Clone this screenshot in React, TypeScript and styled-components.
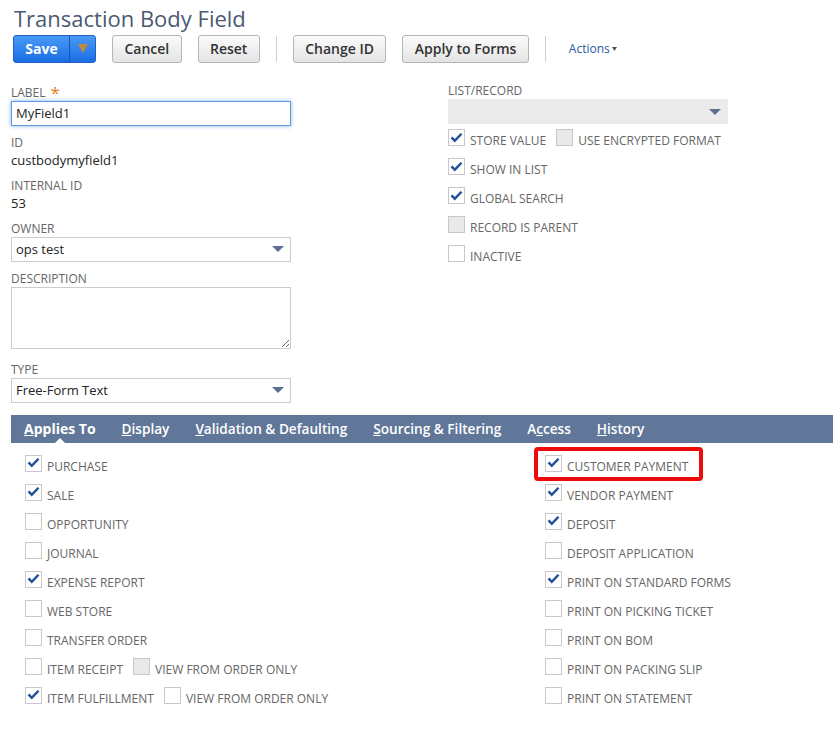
import React from "react";
import styled, { createGlobalStyle } from "styled-components";

const GlobalStyle = createGlobalStyle`
  html, body {
    margin: 0;
    padding: 0;
    background: #fff;
  }
  body {
    font-family: "Open Sans", "Liberation Sans", Arial, sans-serif;
    color: #222;
  }
`;

const Page = styled.div`
  width: 833px;
  overflow: hidden;
`;

const Header = styled.div`
  padding: 5.2px 0 0 13px;
`;

const Title = styled.h1`
  margin: 0 0 0 1px;
  font-size: 22px;
  line-height: 26px;
  font-weight: 400;
  color: #4b5a72;
`;

const Toolbar = styled.div`
  display: flex;
  align-items: center;
  gap: 16px;
  height: 28px;
  margin-top: 3.8px;
`;

const Button = styled.button`
  box-sizing: border-box;
  height: 28px;
  padding: 0 11.4px;
  border: 1px solid #b5b5b5;
  border-radius: 3px;
  background: linear-gradient(#fbfbfb, #e4e4e4);
  font: 600 14px "Open Sans", sans-serif;
  color: #333;
`;

const SplitButton = styled.div`
  box-sizing: border-box;
  display: flex;
  height: 28px;
  border: 1px solid #1c60c8;
  border-radius: 3px;
  background: linear-gradient(#4a9af6, #1a6de3);
  overflow: hidden;
`;

const SaveMain = styled.span`
  width: 55px;
  display: flex;
  align-items: center;
  justify-content: center;
  color: #fff;
  font-weight: 700;
  font-size: 14px;
`;

const SaveMenu = styled.span`
  width: 25px;
  display: flex;
  align-items: center;
  justify-content: center;
  border-left: 1px solid #1a56b4;
`;

const Separator = styled.div`
  width: 1px;
  height: 26px;
  background: #cfcfcf;
`;

const ActionsLink = styled.span`
  margin-left: 7px;
  font-size: 12px;
  color: #2a5aa2;
  display: flex;
  align-items: center;
  gap: 2px;
`;

const FormGrid = styled.div`
  display: grid;
  grid-template-columns: 437px 280px;
  padding: 19.4px 0 0 11px;
`;

const Column = styled.div<{ $offset?: number }>`
  display: flex;
  flex-direction: column;
  padding-top: ${(p) => p.$offset ?? 0}px;
`;

const Field = styled.div<{ $first?: boolean }>`
  margin-top: ${(p) => (p.$first ? 0 : 9)}px;
  width: 280px;
`;

const FieldLabel = styled.div`
  font-size: 12px;
  line-height: 15px;
  color: #666;
  text-transform: uppercase;
  margin-bottom: 1px;
`;

const Required = styled.span`
  color: #e07d22;
  font-size: 17px;
  line-height: 15px;
  vertical-align: top;
  margin-left: 5px;
`;

const Value = styled.div`
  font-size: 13px;
  line-height: 18px;
  color: #222;
`;

const TextInput = styled.input`
  box-sizing: border-box;
  display: block;
  width: 280px;
  height: 25px;
  padding: 0 4px;
  border: 1px solid #5e9be2;
  box-shadow: 0 0 4px rgba(80, 145, 230, 0.7);
  font: 13px "Open Sans", sans-serif;
  color: #222;
  outline: none;
`;

const TextArea = styled.textarea`
  box-sizing: border-box;
  display: block;
  width: 280px;
  height: 62px;
  margin-bottom: 4px;
  border: 1px solid #ccc;
  font: 13px "Open Sans", sans-serif;
`;

const Select = styled.div<{ $disabled?: boolean }>`
  box-sizing: border-box;
  width: 280px;
  height: 25px;
  display: flex;
  align-items: center;
  justify-content: space-between;
  padding: 0 6px 0 4px;
  border: 1px solid ${(p) => (p.$disabled ? "#ebebeb" : "#ccc")};
  background: ${(p) => (p.$disabled ? "#ebebeb" : "#fff")};
  font-size: 13px;
  color: #222;
`;

const CheckList = styled.div<{ $top?: number }>`
  display: flex;
  flex-direction: column;
  gap: 12px;
  margin-top: ${(p) => p.$top ?? 0}px;
`;

const CheckRow = styled.div`
  position: relative;
  display: flex;
  align-items: flex-end;
  height: 17px;
`;

const Box = styled.span<{ $disabled?: boolean; $spaced?: boolean }>`
  box-sizing: border-box;
  flex-shrink: 0;
  align-self: flex-start;
  width: 17px;
  height: 17px;
  margin-right: 5px;
  margin-left: ${(p) => (p.$spaced ? 10 : 0)}px;
  border: 1px solid #c8c8c8;
  background: ${(p) => (p.$disabled ? "#e9e9e9" : "#fff")};
  display: flex;
  align-items: center;
  justify-content: center;
`;

const CheckText = styled.span`
  font-size: 12px;
  line-height: 14px;
  margin-bottom: -2px;
  color: #666;
  text-transform: uppercase;
  white-space: nowrap;
`;

const Highlight = styled.div`
  position: absolute;
  left: -11px;
  top: -8px;
  width: 169px;
  height: 34px;
  box-sizing: border-box;
  border: 4px solid #ee0a0a;
  border-radius: 4px;
  pointer-events: none;
`;

const TabBar = styled.div`
  display: flex;
  align-items: center;
  gap: 26px;
  height: 28px;
  margin: 12.4px 0 0 11px;
  padding-left: 13px;
  background: #607799;
`;

const Tab = styled.span<{ $active?: boolean }>`
  position: relative;
  color: #fff;
  font-size: ${(p) => (p.$active ? 14 : 13.6)}px;
  font-weight: ${(p) => (p.$active ? 700 : 600)};
  line-height: 28px;
  white-space: nowrap;

  &::after {
    content: "";
    display: ${(p) => (p.$active ? "block" : "none")};
    position: absolute;
    left: 50%;
    bottom: 0;
    margin-left: -5px;
    border-left: 5px solid transparent;
    border-right: 5px solid transparent;
    border-bottom: 5px solid #fff;
  }
`;

const AppliesGrid = styled.div`
  display: grid;
  grid-template-columns: 520px 1fr;
  padding: 12px 0 30px 25px;
`;

const Check = () => (
  <svg width="13" height="12" viewBox="0 0 13 12">
    <path d="M0.6 6.2 L2.4 4.6 L4.8 6.9 L10.6 1 L12.4 2.6 L4.8 10.6 Z" fill="#22509a" />
  </svg>
);

const Arrow = ({ color = "#5b7094" }: { color?: string }) => (
  <svg width="12" height="6" viewBox="0 0 12 6">
    <path d="M0 0 H12 L6 6 Z" fill={color} />
  </svg>
);

type Item = {
  label: string;
  checked?: boolean;
  disabled?: boolean;
  highlight?: boolean;
  extra?: { label: string; checked?: boolean; disabled?: boolean };
};

const CheckItem = ({ item }: { item: Item }) => (
  <CheckRow>
    {item.highlight && <Highlight />}
    <Box $disabled={item.disabled}>{item.checked && <Check />}</Box>
    <CheckText>{item.label}</CheckText>
    {item.extra && (
      <>
        <Box $spaced $disabled={item.extra.disabled}>
          {item.extra.checked && <Check />}
        </Box>
        <CheckText>{item.extra.label}</CheckText>
      </>
    )}
  </CheckRow>
);

const topChecks: Item[] = [
  { label: "Store Value", checked: true, extra: { label: "Use Encrypted Format", disabled: true } },
  { label: "Show in List", checked: true },
  { label: "Global Search", checked: true },
  { label: "Record is Parent", disabled: true },
  { label: "Inactive" },
];

const leftApplies: Item[] = [
  { label: "Purchase", checked: true },
  { label: "Sale", checked: true },
  { label: "Opportunity" },
  { label: "Journal" },
  { label: "Expense Report", checked: true },
  { label: "Web Store" },
  { label: "Transfer Order" },
  { label: "Item Receipt", extra: { label: "View from Order Only", disabled: true } },
  { label: "Item Fulfillment", checked: true, extra: { label: "View from Order Only" } },
];

const rightApplies: Item[] = [
  { label: "Customer Payment", checked: true, highlight: true },
  { label: "Vendor Payment", checked: true },
  { label: "Deposit", checked: true },
  { label: "Deposit Application" },
  { label: "Print on Standard Forms", checked: true },
  { label: "Print on Picking Ticket" },
  { label: "Print on BOM" },
  { label: "Print on Packing Slip" },
  { label: "Print on Statement" },
];

const tabs = [
  { key: "A", rest: "pplies To", active: true },
  { key: "D", rest: "isplay" },
  { key: "V", rest: "alidation & Defaulting" },
  { key: "S", rest: "ourcing & Filtering" },
  { pre: "A", key: "c", rest: "cess" },
  { key: "H", rest: "istory" },
];

export default function App() {
  return (
    <Page>
      <GlobalStyle />
      <Header>
        <Title>Transaction Body Field</Title>
        <Toolbar>
          <SplitButton>
            <SaveMain>Save</SaveMain>
            <SaveMenu>
              <svg width="10" height="9" viewBox="0 0 10 9">
                <path d="M0 0 H10 L5 9 Z" fill="#c08a3e" />
              </svg>
            </SaveMenu>
          </SplitButton>
          <Button>Cancel</Button>
          <Button>Reset</Button>
          <Separator />
          <Button>Change ID</Button>
          <Button>Apply to Forms</Button>
          <Separator />
          <ActionsLink>
            Actions
            <svg width="5" height="4" viewBox="0 0 5 4">
              <path d="M0 0 H5 L2.5 4 Z" fill="#555" />
            </svg>
          </ActionsLink>
        </Toolbar>
      </Header>

      <FormGrid>
        <Column $offset={2.2}>
          <Field $first>
            <FieldLabel>
              Label<Required>*</Required>
            </FieldLabel>
            <TextInput defaultValue="MyField1" />
          </Field>
          <Field>
            <FieldLabel>ID</FieldLabel>
            <Value>custbodymyfield1</Value>
          </Field>
          <Field>
            <FieldLabel>Internal ID</FieldLabel>
            <Value>53</Value>
          </Field>
          <Field>
            <FieldLabel>Owner</FieldLabel>
            <Select>
              ops test
              <Arrow />
            </Select>
          </Field>
          <Field>
            <FieldLabel>Description</FieldLabel>
            <TextArea />
          </Field>
          <Field>
            <FieldLabel>Type</FieldLabel>
            <Select>
              Free-Form Text
              <Arrow />
            </Select>
          </Field>
        </Column>
        <Column $offset={1}>
          <Field $first>
            <FieldLabel>List/Record</FieldLabel>
            <Select $disabled>
              <span />
              <Arrow />
            </Select>
          </Field>
          <CheckList $top={5}>
            {topChecks.map((c) => (
              <CheckItem key={c.label} item={c} />
            ))}
          </CheckList>
        </Column>
      </FormGrid>

      <TabBar>
        {tabs.map((t) => (
          <Tab key={t.rest} $active={t.active}>
            {t.pre}
            <u>{t.key}</u>
            {t.rest}
          </Tab>
        ))}
      </TabBar>

      <AppliesGrid>
        <CheckList>
          {leftApplies.map((c) => (
            <CheckItem key={c.label} item={c} />
          ))}
        </CheckList>
        <CheckList>
          {rightApplies.map((c) => (
            <CheckItem key={c.label} item={c} />
          ))}
        </CheckList>
      </AppliesGrid>
    </Page>
  );
}
